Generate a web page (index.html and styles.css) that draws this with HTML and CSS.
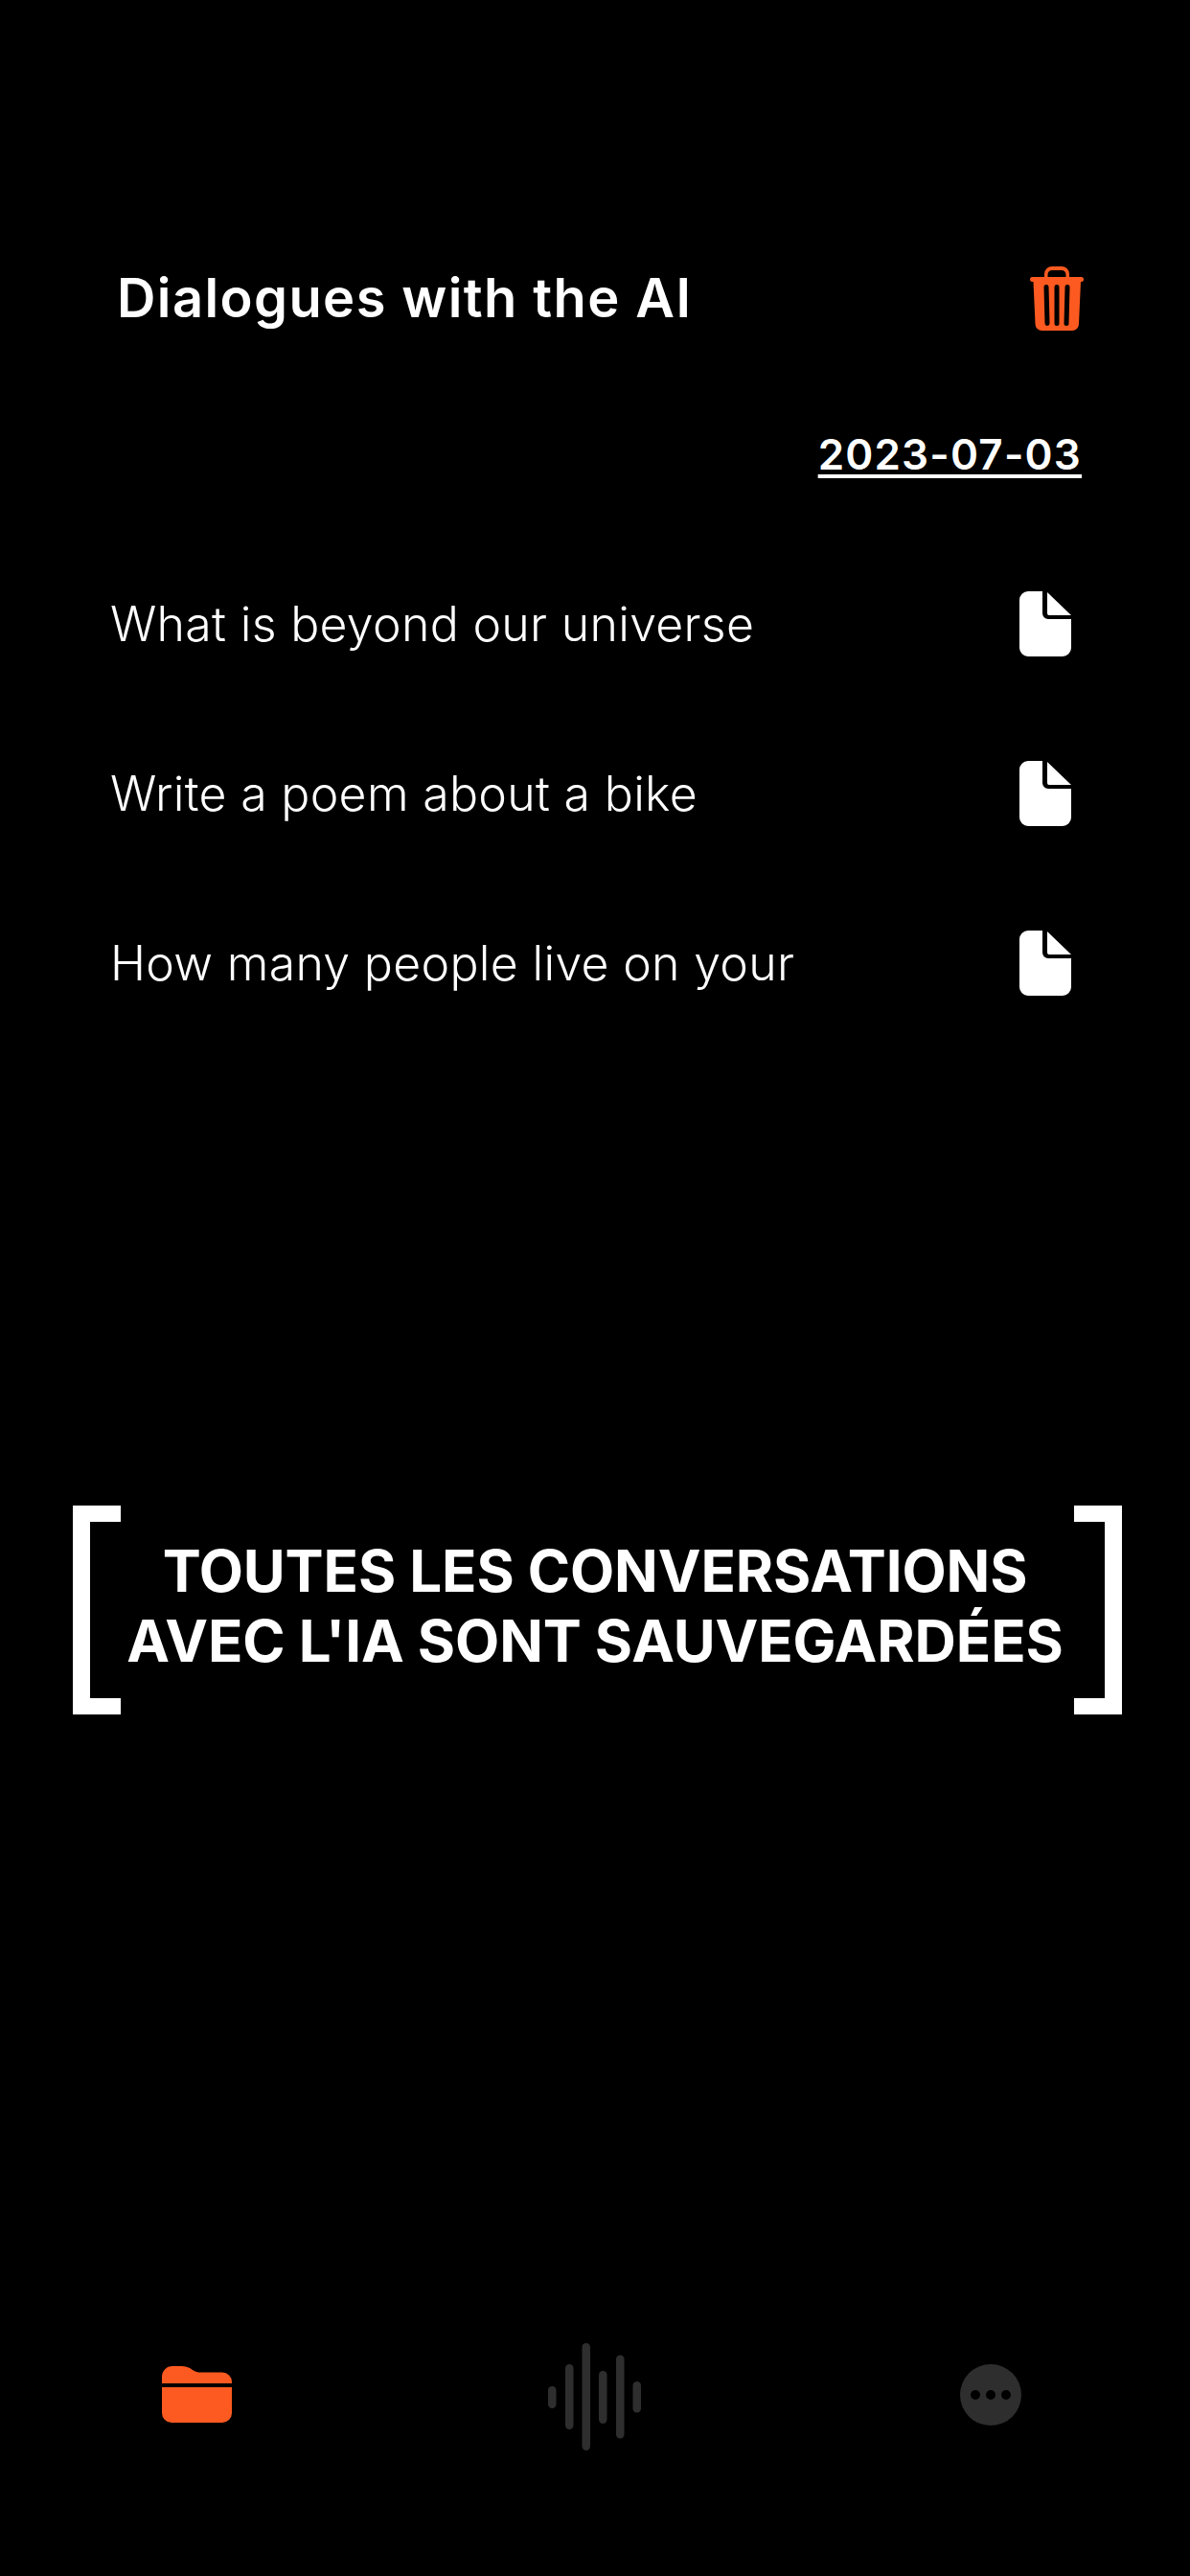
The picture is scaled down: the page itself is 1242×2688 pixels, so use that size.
FILE: index.html
```html
<!DOCTYPE html>
<html>
<head>
    <title>Dialogues with the AI</title>
    <meta name="viewport" content="width=device-width, initial-scale=1">
    <link rel="stylesheet" href="styles.css">
</head>
<body>
    <main class="page">
        <header class="top-bar">
            <h1 class="title">Dialogues with the AI</h1>
            <svg class="trash-icon" viewBox="0 0 56 68" aria-hidden="true">
                <path fill="#fc5a20" fill-rule="evenodd" d="M15 12V9a8 8 0 0 1 8-8h10a8 8 0 0 1 8 8v3h12.500a2.500 2.500 0 0 1 0 5h-.5l-2 44a7 7 0 0 1-7 7H12.500a7 7 0 0 1-7-7l-2-44H2.500a2.500 2.500 0 0 1 0-5zM18.500 12h19V9.500a4.500 4.500 0 0 0-4.500-4.500H23a4.500 4.500 0 0 0-4.500 4.500zM17 20a2.500 2.500 0 0 0-2.500 2.500l1 38a2.500 2.500 0 0 0 5 0l-1-38A2.500 2.500 0 0 0 17 20zM28 20a2.500 2.500 0 0 0-2.500 2.500v38a2.500 2.500 0 0 0 5 0v-38A2.500 2.500 0 0 0 28 20zM39 20a2.500 2.500 0 0 0-2.500 2.500l-1 38a2.500 2.500 0 0 0 5 0l1-38A2.500 2.500 0 0 0 39 20z"/>
            </svg>
        </header>

        <div class="date-row"><span class="date">2023-07-03</span></div>

        <ul class="dialogues">
            <li class="dialogue">
                <span>What is beyond our universe</span>
                <svg class="file-icon" viewBox="0 0 54 68" aria-hidden="true">
                    <path fill="#fff" d="M9 0h15v23a6 6 0 0 0 6 6h24v30a9 9 0 0 1-9 9H9a9 9 0 0 1-9-9V9a9 9 0 0 1 9-9zM29 1l25 24H31a2 2 0 0 1-2-2z"/>
                </svg>
            </li>
            <li class="dialogue">
                <span>Write a poem about a bike</span>
                <svg class="file-icon" viewBox="0 0 54 68" aria-hidden="true">
                    <path fill="#fff" d="M9 0h15v23a6 6 0 0 0 6 6h24v30a9 9 0 0 1-9 9H9a9 9 0 0 1-9-9V9a9 9 0 0 1 9-9zM29 1l25 24H31a2 2 0 0 1-2-2z"/>
                </svg>
            </li>
            <li class="dialogue">
                <span>How many people live on your</span>
                <svg class="file-icon" viewBox="0 0 54 68" aria-hidden="true">
                    <path fill="#fff" d="M9 0h15v23a6 6 0 0 0 6 6h24v30a9 9 0 0 1-9 9H9a9 9 0 0 1-9-9V9a9 9 0 0 1 9-9zM29 1l25 24H31a2 2 0 0 1-2-2z"/>
                </svg>
            </li>
        </ul>

        <section class="banner">
            <div class="bracket bracket-left"></div>
            <p class="banner-text">TOUTES LES CONVERSATIONS<br>AVEC L'IA SONT SAUVEGARDÉES</p>
            <div class="bracket bracket-right"></div>
        </section>

        <nav class="tab-bar">
            <svg class="folder-icon" viewBox="0 0 73 59" aria-hidden="true">
                <path fill="#fc5a20" d="M0 18V11A11 11 0 0 1 11 0h8c6 0 9 1 13 4 3 2 5 2.500 9 2.500h22a10 10 0 0 1 10 10V18zM0 22h73v27a10 10 0 0 1-10 10H10A10 10 0 0 1 0 49z"/>
            </svg>
            <svg class="wave-icon" viewBox="0 0 98 112" aria-hidden="true">
                <g fill="#2e2e2e">
                    <rect x="0" y="45" width="8.500" height="23" rx="4.200"/>
                    <rect x="18" y="22" width="8.500" height="68" rx="4.200"/>
                    <rect x="35.500" y="0" width="8.500" height="112" rx="4.200"/>
                    <rect x="53" y="29" width="8.500" height="55" rx="4.200"/>
                    <rect x="71" y="12.500" width="8.500" height="87" rx="4.200"/>
                    <rect x="88.500" y="40" width="8.500" height="32.500" rx="4.200"/>
                </g>
            </svg>
            <svg class="more-icon" viewBox="0 0 64 64" aria-hidden="true">
                <circle cx="32" cy="32" r="32" fill="#2e2e2e"/>
                <circle cx="16" cy="32" r="5" fill="#000"/>
                <circle cx="32" cy="32" r="5" fill="#000"/>
                <circle cx="48" cy="32" r="5" fill="#000"/>
            </svg>
        </nav>
    </main>
</body>
</html>
```

FILE: styles.css
```css
body {
    background-color: #000;
    color: #fff;
    font-family: Inter, "Liberation Sans", sans-serif;
    margin: 0;
}

.page {
    display: flex;
    flex-direction: column;
    height: 2688px;
    overflow: hidden;
}

.top-bar {
    display: flex;
    justify-content: space-between;
    align-items: center;
    height: 68px;
    margin-top: 277px;
    padding: 0 111px 0 122px;
}

.title {
    font-size: 56px;
    font-weight: 600;
    letter-spacing: 1.4px;
    margin: 0;
}

.trash-icon {
    width: 56px;
    height: 68px;
}

.date-row {
    display: flex;
    justify-content: flex-end;
    height: 53px;
    line-height: 53px;
    margin-top: 103px;
    padding: 0 113px;
}

.date {
    font-size: 44px;
    font-weight: 600;
    letter-spacing: 1.2px;
    text-decoration: underline;
    text-decoration-thickness: 4px;
    text-underline-offset: 5px;
}

.dialogues {
    list-style: none;
    margin: 116px 0 0;
    padding: 0 124px 0 115px;
}

.dialogue {
    display: flex;
    justify-content: space-between;
    align-items: center;
    height: 68px;
    margin-bottom: 109px;
    font-size: 50px;
    font-weight: 300;
    letter-spacing: 0.3px;
}

.file-icon {
    width: 54px;
    height: 68px;
}

.banner {
    display: flex;
    justify-content: space-between;
    align-items: center;
    height: 218px;
    margin-top: 423px;
    padding: 0 71px 0 76px;
}

.bracket {
    box-sizing: border-box;
    width: 50px;
    height: 218px;
    border: solid #fff;
    border-width: 17px 0;
}

.bracket-left {
    border-left-width: 18px;
}

.bracket-right {
    border-right-width: 18px;
}

.banner-text {
    font-size: 60px;
    font-weight: 700;
    letter-spacing: -0.1px;
    line-height: 73px;
    text-align: center;
    margin: 0 5px 9px 0;
}

.tab-bar {
    display: flex;
    justify-content: space-between;
    align-items: center;
    height: 112px;
    margin-top: auto;
    margin-bottom: 131px;
    padding: 0 176px 0 169px;
}

.folder-icon {
    width: 73px;
    height: 59px;
    margin-bottom: 5px;
}

.wave-icon {
    width: 98px;
    height: 112px;
    margin-right: 3px;
}

.more-icon {
    width: 64px;
    height: 64px;
    margin-bottom: 4px;
}
```
